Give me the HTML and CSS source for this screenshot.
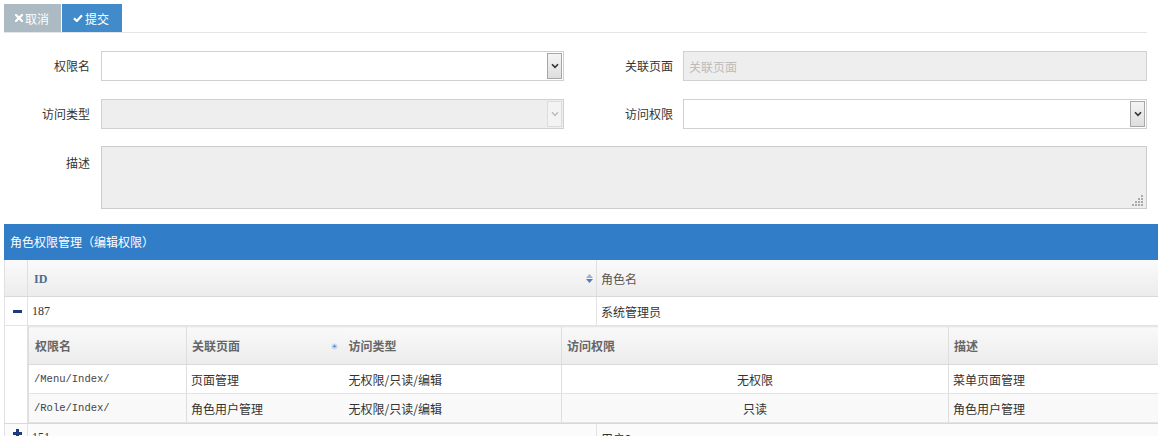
FILE: index.html
```html
<!DOCTYPE html>
<html lang="zh-CN">
<head>
<meta charset="utf-8">
<title>角色权限管理</title>
<link rel="stylesheet" href="styles.css">
</head>
<body>
<div class="page">
  <div class="toolbar">
    <button class="btn btn-cancel" type="button"><svg class="ico" width="8" height="8" viewBox="0 0 8 8"><path d="M1 1L7 7M7 1L1 7" stroke="#fff" stroke-width="2.2" stroke-linecap="square"/></svg>取消</button>
    <button class="btn btn-submit" type="button"><svg class="ico" width="10" height="8" viewBox="0 0 10 8"><path d="M1 4.2L3.8 7L9 1.2" stroke="#fff" stroke-width="2.2" fill="none"/></svg>提交</button>
  </div>

  <div class="form">
    <label class="lbl">权限名</label>
    <div class="select"><span class="sel-val"></span><span class="arrow"><svg width="8" height="6" viewBox="0 0 8 6"><path d="M1 1.2L4 4.4L7 1.2" stroke="#333" stroke-width="1.6" fill="none"/></svg></span></div>
    <label class="lbl">关联页面</label>
    <div class="input disabled"><span class="ph">关联页面</span></div>

    <label class="lbl">访问类型</label>
    <div class="select disabled"><span class="sel-val"></span><span class="arrow"><svg width="8" height="6" viewBox="0 0 8 6"><path d="M1 1.2L4 4.4L7 1.2" stroke="#bbb" stroke-width="1.4" fill="none"/></svg></span></div>
    <label class="lbl">访问权限</label>
    <div class="select"><span class="sel-val"></span><span class="arrow"><svg width="8" height="6" viewBox="0 0 8 6"><path d="M1 1.2L4 4.4L7 1.2" stroke="#333" stroke-width="1.6" fill="none"/></svg></span></div>

    <label class="lbl lbl-top">描述</label>
    <div class="textarea disabled">
      <svg class="grip" width="12" height="12" viewBox="0 0 12 12" fill="#aaa"><rect x="9" y="1" width="2" height="2"/><rect x="6" y="4" width="2" height="2"/><rect x="9" y="4" width="2" height="2"/><rect x="3" y="7" width="2" height="2"/><rect x="6" y="7" width="2" height="2"/><rect x="9" y="7" width="2" height="2"/><rect x="0" y="10" width="2" height="2"/><rect x="3" y="10" width="2" height="2"/><rect x="6" y="10" width="2" height="2"/><rect x="9" y="10" width="2" height="2"/></svg>
    </div>
  </div>

  <div class="panel">
    <div class="panel-title">角色权限管理（编辑权限）</div>
    <table class="grid">
      <colgroup><col class="c-exp"><col class="c-id"><col></colgroup>
      <thead>
        <tr>
          <th class="exp"></th>
          <th class="th-id"><span class="id-txt">ID</span><svg class="sort" width="7" height="9" viewBox="0 0 7 9"><path d="M3.5 0L7 4H0Z" fill="#9bb3cf"/><path d="M0 5H7L3.5 9Z" fill="#4f7fbf"/></svg></th>
          <th>角色名</th>
        </tr>
      </thead>
      <tbody>
        <tr class="row">
          <td class="exp"><span class="minus"></span></td>
          <td class="num">187</td>
          <td>系统管理员</td>
        </tr>
        <tr class="sub-row">
          <td class="exp"></td>
          <td colspan="2" class="sub-cell">
            <table class="subgrid">
              <colgroup><col class="s1"><col class="s2"><col class="s3"><col class="s4"><col></colgroup>
              <thead>
                <tr>
                  <th>权限名</th>
                  <th class="th-rel">关联页面<svg class="sort2" width="7" height="7" viewBox="0 0 7 7"><circle cx="3.5" cy="3.5" r="3" fill="#c9dcf0"/><path d="M3.5 1.5L5.5 4.3H1.5Z" fill="#5b8fd0"/></svg></th>
                  <th class="nb">访问类型</th>
                  <th>访问权限</th>
                  <th>描述</th>
                </tr>
              </thead>
              <tbody>
                <tr>
                  <td class="path">/Menu/Index/</td>
                  <td>页面管理</td>
                  <td class="nb">无权限/只读/编辑</td>
                  <td class="center">无权限</td>
                  <td>菜单页面管理</td>
                </tr>
                <tr class="alt">
                  <td class="path">/Role/Index/</td>
                  <td>角色用户管理</td>
                  <td class="nb">无权限/只读/编辑</td>
                  <td class="center">只读</td>
                  <td>角色用户管理</td>
                </tr>
              </tbody>
            </table>
          </td>
        </tr>
        <tr class="row alt last">
          <td class="exp"><span class="plus"></span></td>
          <td class="num">151</td>
          <td>用户2</td>
        </tr>
      </tbody>
    </table>
  </div>
</div>
</body>
</html>
```

FILE: styles.css
```css
html, body {
  margin: 0;
  padding: 0;
  background: #fff;
  overflow: hidden;
}
body {
  width: 1158px;
  height: 436px;
  font-family: "Noto Sans CJK SC", "Liberation Sans", sans-serif;
  font-size: 12px;
  color: #333;
}
.page {
  padding: 4px 0 0 4px;
}
.toolbar {
  display: flex;
  gap: 1px;
  width: 1143px;
  border-bottom: 1px solid #e5e5e5;
}
.btn {
  height: 28px;
  border: 0;
  margin: 0;
  color: #fff;
  font-family: inherit;
  font-size: 12px;
  display: flex;
  align-items: center;
  gap: 2px;
  padding: 0 10px 0 10px;
  cursor: pointer;
}
.btn-cancel {
  width: 57px;
  background: #abbac3;
  padding-left: 11px;
}
.btn-submit {
  width: 60px;
  background: #428bca;
  padding-left: 11px;
}
.ico { flex: none; }

.form {
  display: grid;
  grid-template-columns: 97px 463px 119px 464px;
  grid-auto-rows: 30px 30px 64px;
  grid-template-rows: 30px 30px 64px;
  row-gap: 18px;
  padding: 18px 0 13px 0;
  width: 1143px;
}
.lbl {
  text-align: right;
  padding-right: 11px;
  line-height: 30px;
  color: #333;
}
.form .lbl:nth-of-type(2),
.form .lbl:nth-of-type(4) { padding-right: 10px; }
.lbl-top { align-self: start; line-height: 32px; }

.select, .input, .textarea {
  box-sizing: border-box;
  border: 1px solid #d0d0d0;
  background: #fff;
  height: 30px;
  position: relative;
  display: flex;
  align-items: center;
}
.disabled { background: #eeeeee; }
.select .sel-val { flex: 1; }
.arrow {
  width: 15px;
  height: 26px;
  margin-right: 1px;
  border: 1px solid #a7a7a7;
  background: linear-gradient(#f4f4f4, #dedede);
  display: flex;
  align-items: center;
  justify-content: center;
  box-sizing: border-box;
}
.select.disabled .arrow {
  border-color: #dcdcdc;
  background: #f3f3f3;
}
.ph {
  color: #bbb;
  padding-left: 5px;
}
.textarea {
  grid-column: 2 / 5;
  height: 63px;
  margin-top: -1px;
  border-color: #ccc;
}
.grip {
  position: absolute;
  right: 2px;
  bottom: 2px;
}

.panel {
  width: 1200px;
}
.panel-title {
  height: 36px;
  line-height: 35px;
  background: #327dc8;
  color: #fff;
  padding-left: 6px;
  font-size: 12px;
}
.grid, .subgrid {
  border-collapse: collapse;
  table-layout: fixed;
  width: 100%;
}
.c-exp { width: 23px; }
.c-id { width: 569px; }
.grid > thead th {
  height: 36px;
  text-align: left;
  font-weight: normal;
  color: #555;
  padding: 0 0 0 4px;
  background: linear-gradient(#fafafa, #ececec);
  border-bottom: 1px solid #d8d8d8;
  border-left: 1px solid #e0e0e0;
  font-size: 12px;
}
.grid > thead th.exp { border-left: 1px solid #e0e0e0; }
.th-id {
  position: relative;
}
.id-txt {
  font-family: "Liberation Serif", serif;
  font-weight: bold;
  color: #4d6d92;
  padding-left: 2px;
}
.sort {
  position: absolute;
  right: 3px;
  top: 14px;
}
.grid > tbody > .row > td {
  height: 28px;
  border-bottom: 1px solid #e3e3e3;
  border-left: 1px solid #e3e3e3;
  padding: 0 0 0 4px;
}
.grid > tbody > .row.alt > td { background: #fbfbfb; }
.grid > tbody > .row.last > td { vertical-align: top; padding-top: 6px; }
.grid > tbody > .row.last > td.exp { padding: 0; }
.num {
  font-family: "Liberation Serif", serif;
  font-size: 12px;
}
.exp {
  border-left: 1px solid #e0e0e0;
  padding: 0 !important;
  position: relative;
}
.minus, .plus {
  position: absolute;
  left: 8px;
  top: 13px;
  width: 9px;
  height: 3px;
  background: #1d3a7a;
}
.plus { top: 8px; }
.plus::after {
  content: "";
  position: absolute;
  left: 3px;
  top: -3px;
  width: 3px;
  height: 9px;
  background: #1d3a7a;
}
.sub-row > td {
  border-bottom: 1px solid #d8d8d8;
  border-left: 1px solid #e0e0e0;
  padding: 0;
  vertical-align: top;
}
.sub-cell { padding: 0; }
.s1 { width: 158px; }
.s2 { width: 155px; }
.s3 { width: 220px; }
.s4 { width: 387px; }
.subgrid thead th {
  height: 37px;
  text-align: left;
  font-weight: bold;
  color: #666;
  padding: 0 0 0 5px;
  background: linear-gradient(#f9f9f9, #ececec);
  border-top: 1px solid #e6e6e6;
  border-left: 1px solid #dedede;
  border-bottom: 1px solid #dadada;
}
.subgrid thead th:first-child { padding-left: 6px; }
.th-rel { position: relative; }
.sort2 {
  position: absolute;
  right: 4px;
  top: 16px;
}
.subgrid .nb { border-left: 0 !important; padding-left: 7px !important; }
.subgrid tbody td {
  height: 28px;
  border-bottom: 1px solid #e3e3e3;
  border-left: 1px solid #dedede;
  padding: 0 0 0 4px;
  background: #fff;
}
.subgrid tbody tr.alt td { background: #f9f9f9; }
.subgrid tbody td:first-child { padding-left: 5px; }
.path {
  font-family: "Liberation Mono", monospace;
  font-size: 10.5px;
  color: #444;
}
.center { text-align: center; padding-left: 0 !important; }
```
